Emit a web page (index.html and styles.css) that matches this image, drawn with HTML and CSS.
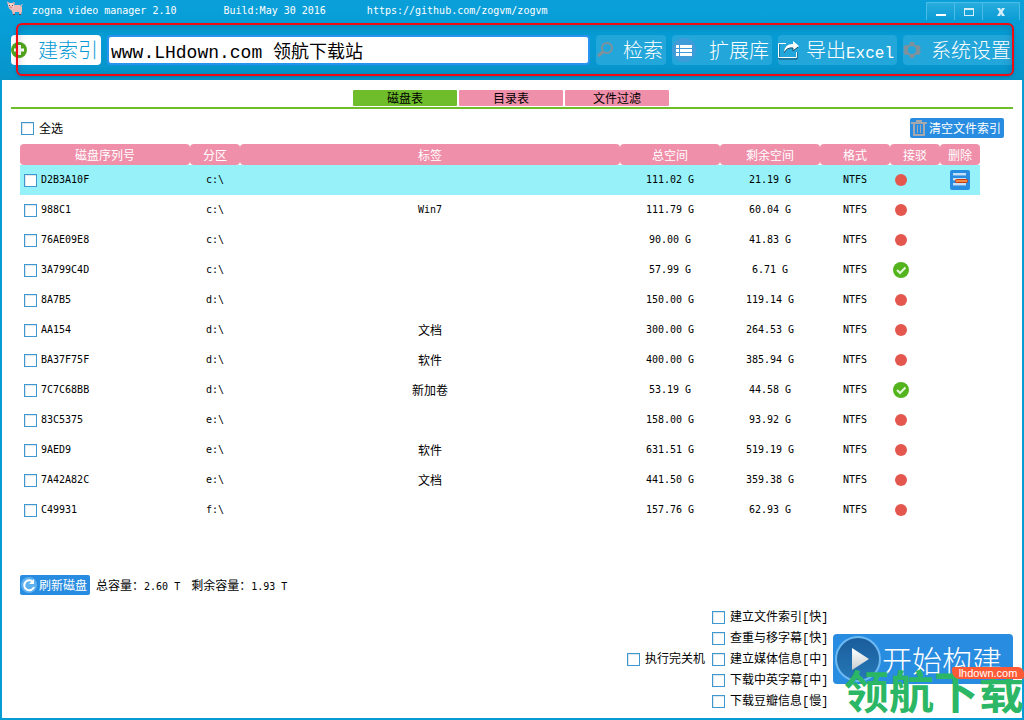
FILE: index.html
```html
<!DOCTYPE html>
<html lang="zh-CN">
<head>
<meta charset="utf-8">
<meta name="viewport" content="width=device-width, initial-scale=1">
<title>zogna video manager 2.10</title>
<link rel="stylesheet" href="styles.css">
</head>
<body>
<header class="header">
  <div class="titlebar">
    <svg class="pig" viewBox="0 0 16 16" aria-hidden="true">
      <path d="M5 6 8 5h5l2 2v4l-1 4h-1.500l-.5-3H8l-.5 3H6L5 11 3 9z" fill="#efb9b6"/>
      <path d="M0 1.500 3 3h2l3-1L7 5.500 6.500 8.500 4 9.500 2 8.500 1 5z" fill="#f7d3cd"/>
      <path d="M0 1.500 2.500 3 1.500 4zM8 2 5.500 3 7 4.500zM2.500 6.500h3v2h-3z" fill="#d98f90"/>
      <path d="M2 5h1v1H2zM5 5h1v1H5zM6 14h2v1H6zM12 14h2v1h-2z" fill="#5d4145"/>
      <path d="M14 6q2-1 1-2" stroke="#efb9b6" fill="none"/>
    </svg>
    <span class="app-name">zogna video manager 2.10</span>
    <span class="build">Build:May 30 2016</span>
    <a class="repo" href="https://github.com/zogvm/zogvm">https://github.com/zogvm/zogvm</a>
    <div class="window-buttons">
      <button type="button" aria-label="最小化"><svg width="12" height="12" viewBox="0 0 12 12"><path d="M1 8h10v2H1z" fill="#fff"/></svg></button>
      <button type="button" aria-label="最大化"><svg width="12" height="12" viewBox="0 0 12 12"><path d="M1 2h10v8H1zM2 4v5h8V4z" fill="#d5eff9" fill-rule="evenodd"/></svg></button>
      <button type="button" class="close" aria-label="关闭"><svg width="12" height="12" viewBox="0 0 12 12"><path d="M2 2h3l1 2 1-2h3L7.500 6 10 10H7L6 8l-1 2H2l2.500-4z" fill="#d5eff9"/></svg></button>
    </div>
  </div>
  <div class="toolbar">
    <button type="button" class="tool tool-primary">
      <svg width="16" height="16" viewBox="0 0 16 16"><circle cx="8" cy="8" r="8" fill="#52a51c"/><path d="M7 3h3v3.500h3v3h-3V13H7V9.500H3v-3h4z" fill="#fff"/></svg>
      <span>建索引</span>
    </button>
    <input class="search" type="text" aria-label="检索内容" value="www.LHdown.com 领航下载站" autofocus>
    <button type="button" class="tool">
      <svg width="18" height="18" viewBox="0 0 18 18"><circle cx="11" cy="7" r="5" fill="none" stroke="#80919a" stroke-width="2"/><path d="M7.500 10.500 2 15" stroke="#80919a" stroke-width="3"/></svg>
      <span>检索</span>
    </button>
    <button type="button" class="tool tool-library">
      <svg width="24" height="24" viewBox="0 0 24 24"><circle cx="12" cy="12" r="12" fill="#409cd8"/><path d="M4 7h3v3H4zM8 7h12v3H8zM4 11h3v3H4zM8 11h12v3H8zM4 15h3v3H4zM8 15h12v3H8z" fill="#fff"/></svg>
      <span>扩展库</span>
    </button>
    <button type="button" class="tool tool-export">
      <svg width="21" height="20" viewBox="0 0 21 20"><path d="M1 4v15h18v-7" fill="none" stroke="#1b4f69"/><path d="M8 3.500H.5v14h18V12" fill="none" stroke="#fff"/><path d="M6 13q0-9 9-9V1l6 5-6 5V8q-6-1-9 5z" fill="#fff"/><path d="M6 13q3-6 9-5v3l5-4" fill="none" stroke="#1b4f69"/></svg>
      <span>导出<span class="tool-latin">Excel</span></span>
    </button>
    <button type="button" class="tool tool-settings">
      <svg width="18" height="18" viewBox="0 0 18 18"><path d="M7 1h4l.5 2.500 2 1L16 4l2 3.500L16 9l2 1.500-2 3.500-2.500-.5-2 1L11 17H7l-.5-2.500-2-1L2 14 0 10.500 2 9 0 7.500 2 4l2.500.5 2-1zM9 5a4 4 0 1 0 0 8 4 4 0 0 0 0-8z" fill="#80919a" fill-rule="evenodd"/></svg>
      <span>系统设置</span>
    </button>
  </div>
  <div class="highlight"></div>
</header>

<main class="main">
  <nav class="tabs">
    <button type="button" class="tab tab-active">磁盘表</button>
    <button type="button" class="tab">目录表</button>
    <button type="button" class="tab">文件过滤</button>
  </nav>

  <section class="panel">
    <div class="panel-top">
      <label class="check"><input type="checkbox"> 全选</label>
      <button type="button" class="action">
        <svg width="16" height="18" viewBox="0 0 16 18"><path d="M0 3h5V1h6v2h5v2h-2v12H2V5H0zM4 5v10h8V5zM6 6h1v8H6zM9 6h1v8H9z" fill="#a5a9ad" fill-rule="evenodd"/></svg>
        清空文件索引
      </button>
    </div>

    <table class="disks">
      <colgroup><col class="c-serial"><col class="c-part"><col><col class="c-size"><col class="c-size"><col class="c-format"><col class="c-link"><col class="c-del"></colgroup>
      <thead>
        <tr><th>磁盘序列号</th><th>分区</th><th>标签</th><th>总空间</th><th>剩余空间</th><th>格式</th><th>接驳</th><th>删除</th></tr>
      </thead>
      <tbody id="rows"></tbody>
    </table>

    <div class="summary">
      <button type="button" class="action">
        <svg width="16" height="18" viewBox="0 0 16 18"><circle cx="8" cy="9" r="8" fill="#5eb0ef"/><path d="M12 6A5 5 0 1 0 13 11" fill="none" stroke="#fff" stroke-width="2"/><path d="M13 3v5H8z" fill="#fff"/></svg>
        刷新磁盘
      </button>
      <span>总容量：<span class="num">2.60 T</span></span>
      <span class="free">剩余容量：<span class="num">1.93 T</span></span>
    </div>
  </section>

  <footer class="footer">
    <label class="check"><input type="checkbox"> 执行完关机</label>
    <div class="options">
      <label class="check"><input type="checkbox"> 建立文件索引[快]</label>
      <label class="check"><input type="checkbox"> 查重与移字幕[快]</label>
      <label class="check"><input type="checkbox"> 建立媒体信息[中]</label>
      <label class="check"><input type="checkbox"> 下载中英字幕[中]</label>
      <label class="check"><input type="checkbox"> 下载豆瓣信息[慢]</label>
    </div>
    <button type="button" class="start">
      <svg width="48" height="48" viewBox="0 0 48 48">
        <defs><linearGradient id="disc" x2="0" y2="1"><stop stop-color="#1a5c9b"/><stop offset="1" stop-color="#2779b8"/></linearGradient><linearGradient id="play" x2="0" y2="1"><stop stop-color="#fff"/><stop offset="1" stop-color="#c9cdd1"/></linearGradient></defs>
        <circle cx="24" cy="24" r="22" fill="url(#disc)" stroke="#6db9f2" stroke-width="2"/>
        <path d="M18 13 35 24 18 35z" fill="url(#play)"/>
      </svg>
      <span>开始构建</span>
    </button>
  </footer>
</main>
<div class="mark"><span class="mark-text">领航下载</span><span class="mark-badge">lhdown.com</span></div>
<script src="app.js"></script>
</body>
</html>
```

FILE: styles.css
```css
* { box-sizing: border-box; }

body {
  margin: 0;
  min-height: 100vh;
  display: flex;
  flex-direction: column;
  position: relative;
  overflow-x: hidden;
  background: #fff;
  color: #000;
  font: 12px/20px "Noto Sans CJK SC", sans-serif;
}

button, input { font: inherit; color: inherit; }
button { border: 0; padding: 0; background: none; cursor: pointer; }
svg { display: block; flex: none; }

.header {
  position: relative;
  height: 80px;
  color: #fff;
  background: linear-gradient(#0a9fd8, #079ed8 22px, #0795cb 76px, #0892c6);
}

.titlebar {
  display: flex;
  height: 22px;
  padding-left: 7px;
  font: 10px/22px "DejaVu Sans Mono", monospace;
}
.pig { width: 16px; height: 16px; }
.app-name { margin-left: 9px; }
.build { margin-left: 47px; }
.repo { margin-left: 41px; color: inherit; text-decoration: none; }

.window-buttons {
  display: flex;
  height: 18px;
  margin: 2px 4px 0 auto;
}
.window-buttons button {
  display: grid;
  place-items: center;
  width: 28px;
  border: 1px solid #4abce5;
  border-width: 1px 0 0 1px;
  background: linear-gradient(#28acdd, #0a9cd5);
}
.window-buttons .close { width: 38px; border-right-width: 1px; }

.toolbar {
  display: flex;
  gap: 6px;
  height: 56px;
  padding: 13px 11px;
}
.tool {
  display: flex;
  align-items: center;
  gap: 9px;
  height: 30px;
  padding-right: 3px;
  border-radius: 4px;
  background: #23a6da;
  font-size: 20px;
  font-weight: 300;
  line-height: 28px;
  white-space: nowrap;
}
.tool-primary { gap: 11px; background: #fff; color: #079bd5; }
.tool-library { gap: 13px; }
.tool-export { gap: 7px; }
.tool-settings { gap: 10px; padding-right: 2px; }
.tool-latin { font-family: "Liberation Mono", monospace; font-size: 16px; line-height: 1; }

.search {
  flex: 1;
  min-width: 0;
  height: 30px;
  padding: 0 2px;
  border: 2px solid #2994ef;
  border-radius: 4px;
  outline: 0;
  background: #fff;
  color: #000;
  font: 18px/26px "Liberation Mono", "Noto Sans CJK SC", monospace;
}

.highlight {
  position: absolute;
  inset: 23px 10px 4px 16px;
  border: 2px solid #f00a12;
  border-radius: 6px;
  box-shadow: inset 0 2px 8px rgba(0, 40, 70, .25), 0 1px 3px rgba(0, 40, 70, .25);
  pointer-events: none;
}

.main {
  flex: 1;
  display: flex;
  flex-direction: column;
  border: 2px solid #069dd5;
  border-top: 0;
}

.tabs {
  display: flex;
  justify-content: center;
  gap: 2px;
  margin: 10px 9px 0;
  padding: 0 2px 1px 0;
  border-bottom: 2px solid #6fbd2a;
}
.tab {
  width: 104px;
  height: 16px;
  border-radius: 1px;
  background: #ef8faa;
  line-height: 16px;
}
.tab-active { background: #6fbd2a; }

.panel { margin: 9px 42px 0 18px; }
.panel-top {
  display: flex;
  justify-content: space-between;
  margin-right: -24px;
  padding-bottom: 6px;
}

.check {
  display: flex;
  align-items: center;
  gap: 5px;
  white-space: nowrap;
}
.panel-top .check { padding-left: 1px; }
input[type="checkbox"] {
  appearance: none;
  flex: none;
  width: 13px;
  height: 13px;
  margin: 0;
  border: 1px solid #3d98d0;
  background: #fff;
  box-shadow: inset 1px 1px 1px #dce5ec;
}
input[type="checkbox"]:checked { background: #3d98d0; }

.action {
  display: flex;
  align-items: center;
  gap: 2px;
  height: 20px;
  padding: 0 3px 0 1px;
  border-radius: 2px;
  background: #288ce0;
  color: #fff;
  white-space: nowrap;
}

.disks {
  width: 100%;
  table-layout: fixed;
  border-collapse: collapse;
  text-align: center;
}
.c-serial { width: 170px; }
.c-part, .c-link { width: 50px; }
.c-size { width: 100px; }
.c-format { width: 70px; }
.c-del { width: 40px; }
.disks th {
  height: 21px;
  padding: 0;
  border-radius: 4px;
  background: #ef8faa;
  color: #fff;
  font-weight: 400;
}
.disks td { height: 30px; padding: 0; }
.disks .selected { background: #96f1f8; }
.serial { gap: 4px; padding-left: 4px; }
.num, .serial { font-family: "DejaVu Sans Mono", monospace; font-size: 10px; }
.link svg { margin-left: 3px; }
.delete {
  display: block;
  width: 20px;
  height: 20px;
  margin: 0 auto;
  border-radius: 2px;
  background: #288ce0;
}

.summary {
  display: flex;
  gap: 6px;
  margin-top: 50px;
}
.free { margin-left: 5px; }

.footer {
  display: flex;
  justify-content: flex-end;
  align-items: center;
  gap: 7px;
  margin-top: auto;
  padding: 0 9px 6px;
}
.footer .check { height: 21px; font-family: "Liberation Mono", "Noto Sans CJK SC", monospace; }
.options { width: 114px; }
.start {
  display: flex;
  align-items: center;
  width: 180px;
  height: 50px;
  margin-bottom: 2px;
  padding-left: 1px;
  border-radius: 4px;
  background: #288ce0;
  color: #fff;
  font-size: 30px;
  font-weight: 300;
  line-height: 46px;
}

.mark {
  position: absolute;
  right: 0;
  bottom: 0;
  width: 180px;
  height: 56px;
  pointer-events: none;
}
.mark-text {
  display: block;
  color: #2bb765;
  font-size: 45px;
  font-weight: 700;
  line-height: 52px;
  white-space: nowrap;
}
.mark-badge {
  position: absolute;
  top: 3px;
  right: 0;
  width: 72px;
  border-radius: 2px 6px 2px 8px;
  background: #ff5a36;
  color: #fff;
  font: 11px/12px "Liberation Sans", sans-serif;
  text-align: center;
}
```

FILE: app.js
```javascript
const disks = [
  ["D2B3A10F", "c:\\", "", "111.02 G", "21.19 G", false],
  ["988C1", "c:\\", "Win7", "111.79 G", "60.04 G", false],
  ["76AE09E8", "c:\\", "", "90.00 G", "41.83 G", false],
  ["3A799C4D", "c:\\", "", "57.99 G", "6.71 G", true],
  ["8A7B5", "d:\\", "", "150.00 G", "119.14 G", false],
  ["AA154", "d:\\", "文档", "300.00 G", "264.53 G", false],
  ["BA37F75F", "d:\\", "软件", "400.00 G", "385.94 G", false],
  ["7C7C68BB", "d:\\", "新加卷", "53.19 G", "44.58 G", true],
  ["83C5375", "e:\\", "", "158.00 G", "93.92 G", false],
  ["9AED9", "e:\\", "软件", "631.51 G", "519.19 G", false],
  ["7A42A82C", "e:\\", "文档", "441.50 G", "359.38 G", false],
  ["C49931", "f:\\", "", "157.76 G", "62.93 G", false]
];

const offline = '<svg width="16" height="16" viewBox="0 0 16 16"><circle cx="8" cy="8" r="6" fill="#e4574f"/></svg>';
const online = '<svg width="16" height="16" viewBox="0 0 16 16"><circle cx="8" cy="8" r="8" fill="#54b41d"/><path d="M4 8l3 3 5.500-5.500" fill="none" stroke="#e4f6dc" stroke-width="2"/></svg>';
const remove = '<button type="button" class="delete" aria-label="删除"><svg width="20" height="20" viewBox="0 0 20 20"><path d="M3 3h13v3H3zM3 8h13v3H3zM3 13h13v3H3z" fill="#c3e0fa"/><path d="M3 5h13v1H3zM3 10h13v1H3zM3 15h13v1H3z" fill="#70aee8"/><rect x="5.500" y="9.500" width="12" height="3" rx="1" fill="#f28b43" stroke="#c93a14"/></svg></button>';

document.getElementById("rows").innerHTML = disks.map(([serial, part, label, total, free, linked], i) => `
  <tr class="${i === 0 ? "selected" : ""}">
    <td><label class="check serial"><input type="checkbox"> ${serial}</label></td>
    <td class="num">${part}</td>
    <td class="${label === "Win7" ? "num" : ""}">${label}</td>
    <td class="num">${total}</td>
    <td class="num">${free}</td>
    <td class="num">NTFS</td>
    <td class="link">${linked ? online : offline}</td>
    <td>${i === 0 ? remove : ""}</td>
  </tr>`).join("");
```
